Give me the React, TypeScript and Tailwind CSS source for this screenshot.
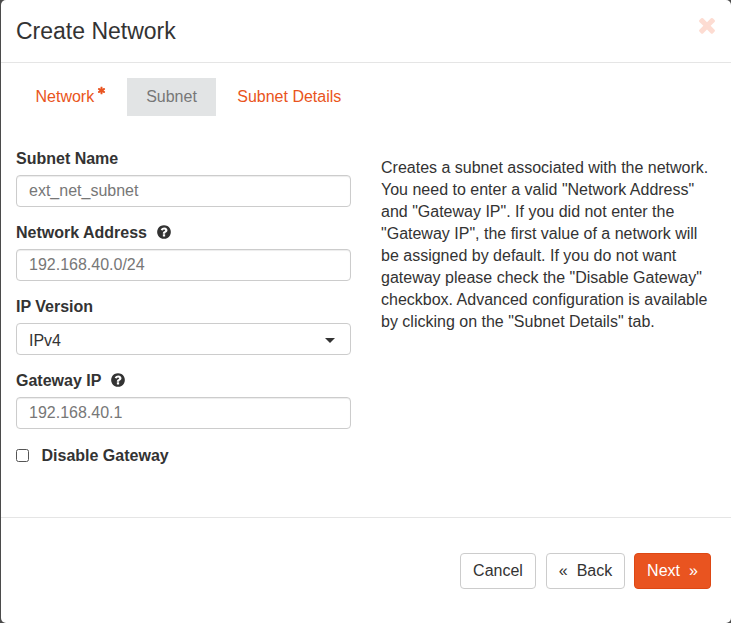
import type { ReactNode } from "react";

function Glyph({ d, className }: { d: string; className: string }) {
  return (
    <svg viewBox="0 0 1792 1792" fill="currentColor" className={className} aria-hidden="true">
      <path d={d} />
    </svg>
  );
}

const TIMES =
  "M1490 1322q0 40-28 68l-136 136q-28 28-68 28t-68-28l-294-294-294 294q-28 28-68 28t-68-28l-136-136q-28-28-28-68t28-68l294-294-294-294q-28-28-28-68t28-68l136-136q28-28 68-28t68 28l294 294 294-294q28-28 68-28t68 28l136 136q28 28 28 68t-28 68l-294 294 294 294q28 28 28 68z";
const QUESTION =
  "M1024 1376v-192q0-14-9-23t-23-9h-192q-14 0-23 9t-9 23v192q0 14 9 23t23 9h192q14 0 23-9t9-23zm256-672q0-88-55.5-163t-138.5-116-170-41q-243 0-371 213-15 24 8 42l132 100q7 6 19 6 16 0 25-12 53-68 86-92 34-24 86-24 48 0 85.5 26t37.5 59q0 38-20 61t-68 45q-63 28-115.5 86.5t-52.5 125.5v36q0 14 9 23t23 9h192q14 0 23-9t9-23q0-19 21.5-49.5t54.5-49.5q32-18 49-28.5t46-35 44.5-48 28-60.5 12.5-81zm384 192q0 209-103 385.5t-279.5 279.5-385.5 103-385.5-103-279.5-279.5-103-385.5 103-385.5 279.5-279.5 385.5-103 385.5 103 279.5 279.5 103 385.5z";
const ASTERISK =
  "M1546 1050q46 26 59.5 77.5t-12.5 97.5l-64 110q-26 46-77.5 59.5t-97.5-12.5l-266-153v307q0 52-38 90t-90 38h-128q-52 0-90-38t-38-90v-307l-266 153q-46 26-97.5 12.5t-77.5-59.5l-64-110q-26-46-12.5-97.5t59.5-77.5l266-154-266-154q-46-26-59.5-77.5t12.5-97.5l64-110q26-46 77.5-59.5t97.5 12.5l266 153v-307q0-52 38-90t90-38h128q52 0 90 38t38 90v307l266-153q46-26 97.5-12.5t77.5 59.5l64 110q26 46 12.5 97.5t-59.5 77.5l-266 154z";

function Field({ label, help, children }: { label: string; help?: boolean; children: ReactNode }) {
  return (
    <div className="mb-[15px]">
      <div className="mb-[5px] flex h-[22px] items-center font-bold">
        {label}
        {help && <Glyph d={QUESTION} className="mb-0.5 ml-[9px] size-4" />}
      </div>
      {children}
    </div>
  );
}

function TextInput({ value }: { value: string }) {
  return (
    <input
      readOnly
      value={value}
      className="block h-8 w-full rounded-[4px] border border-[#ccc] bg-white px-3 text-[#777] shadow-[inset_0_1px_1px_rgba(0,0,0,0.075)] outline-none"
    />
  );
}

export default function App() {
  return (
    <div className="h-[623px] w-[731px] overflow-hidden bg-[#4b4b4b] pl-px font-['Liberation_Sans',Arial,sans-serif] text-base leading-[22px] text-[#333]">
      <div className="flex h-full flex-col rounded-[5px] bg-white">
        <header className="flex h-[63px] shrink-0 items-start justify-between border-b border-[#e5e5e5] pr-3 pl-[15px]">
          <h1 className="pt-[17px] text-[23px] leading-7">Create Network</h1>
          <button className="mt-[13px] text-[#fddcd2]" aria-label="Close">
            <Glyph d={TIMES} className="size-6" />
          </button>
        </header>

        <nav className="mt-[15px] flex h-[38px] shrink-0 items-center pl-[15px] text-[#e95420]">
          <a className="flex w-[111px] items-center pl-[19.5px]">
            Network
            <Glyph d={ASTERISK} className="mb-3.5 ml-[3px] size-[9px]" />
          </a>
          <a className="flex h-full w-[89px] items-center justify-center bg-[#e2e4e5] text-[#777]">Subnet</a>
          <a className="pl-[21.25px]">Subnet Details</a>
        </nav>

        <main className="flex flex-1 pl-[15px]">
          <form className="w-[335px] pt-8">
            <Field label="Subnet Name">
              <TextInput value="ext_net_subnet" />
            </Field>
            <Field label="Network Address" help>
              <TextInput value="192.168.40.0/24" />
            </Field>
            <Field label="IP Version">
              <div className="flex h-8 items-center justify-between rounded-[4px] border border-[#ccc] pr-[15px] pl-3">
                <span className="pt-1">IPv4</span>
                <span className="mt-0.5 size-0 border-x-[5px] border-t-[5px] border-x-transparent border-t-[#333]" />
              </div>
            </Field>
            <Field label="Gateway IP" help>
              <TextInput value="192.168.40.1" />
            </Field>
            <label className="flex items-center pt-px font-bold">
              <input
                type="checkbox"
                className="mr-[12.5px] mb-px size-[13px] appearance-none rounded-[2.5px] border border-[#555] bg-white"
              />
              Disable Gateway
            </label>
          </form>
          <p className="ml-[30px] w-[335px] pt-[41px]">
            Creates a subnet associated with the network. You need to enter a valid "Network Address" and "Gateway IP".
            If you did not enter the "Gateway IP", the first value of a network will be assigned by default. If you do
            not want gateway please check the "Disable Gateway" checkbox. Advanced configuration is available by
            clicking on the "Subnet Details" tab.
          </p>
        </main>

        <footer className="flex h-[106px] shrink-0 items-start justify-end border-t border-[#e5e5e5] pt-[35px] pr-5">
          <button className="h-9 w-[76px] rounded-[4px] border border-[#ccc] bg-white">Cancel</button>
          <button className="ml-2.5 flex h-9 w-[79px] items-center justify-center gap-[9px] rounded-[4px] border border-[#ccc] bg-white">
            <span>«</span>
            <span>Back</span>
          </button>
          <button className="ml-[9px] flex h-9 w-[77px] items-center justify-center gap-[9px] rounded-[4px] border border-[#dd4814] bg-[#e95420] text-white">
            <span>Next</span>
            <span>»</span>
          </button>
        </footer>
      </div>
    </div>
  );
}
